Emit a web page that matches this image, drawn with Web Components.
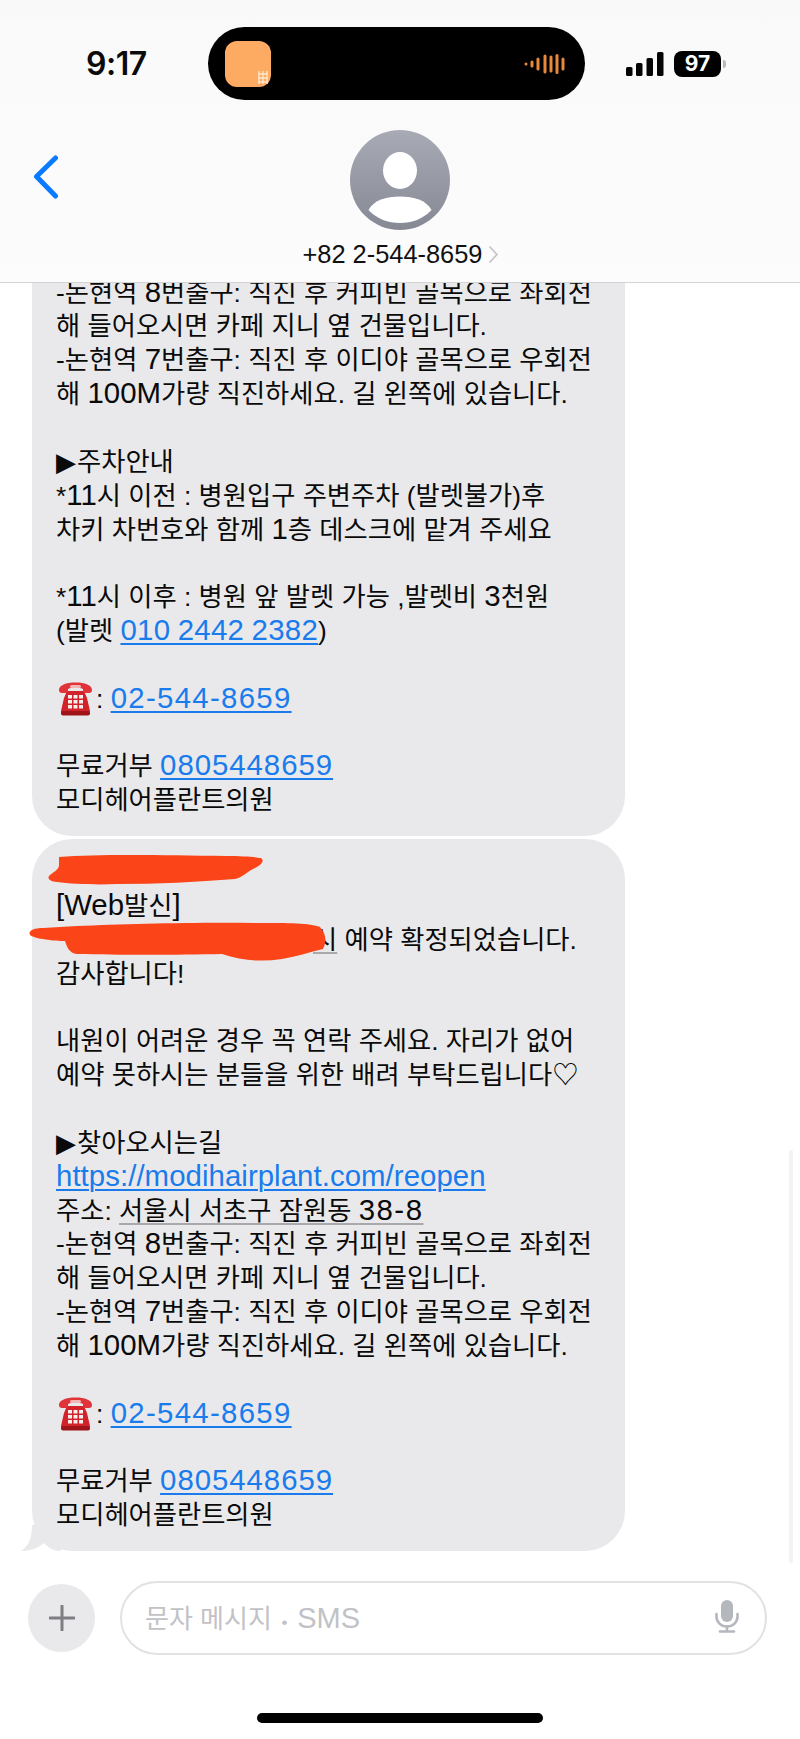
<!DOCTYPE html>
<html lang="ko">
<head>
<meta charset="utf-8">
<title>메시지</title>
<style>
  html, body { margin: 0; padding: 0; background: #fff; }
  body { width: 800px; height: 1739px; overflow: hidden; font-family: "Liberation Sans", "Noto Sans CJK KR", sans-serif; }
</style>
</head>
<body>
<sms-screen>
  <thread-header slot="header" number="+82 2-544-8659"></thread-header>

  <msg-bubble cut>
    <msg-line>-논현역 <msg-num>8</msg-num>번출구: 직진 후 커피빈 골목으로 좌회전</msg-line>
    <msg-line>해 들어오시면 카페 지니 옆 건물입니다.</msg-line>
    <msg-line>-논현역 <msg-num>7</msg-num>번출구: 직진 후 이디야 골목으로 우회전</msg-line>
    <msg-line>해 <msg-num>100M</msg-num>가량 직진하세요. 길 왼쪽에 있습니다.</msg-line>
    <msg-line></msg-line>
    <msg-line><msg-arrow>▶</msg-arrow>주차안내</msg-line>
    <msg-line>*<msg-num>11</msg-num>시 이전 : 병원입구 주변주차 (발렛불가)후</msg-line>
    <msg-line>차키 차번호와 함께 <msg-num>1</msg-num>층 데스크에 맡겨 주세요</msg-line>
    <msg-line></msg-line>
    <msg-line>*<msg-num>11</msg-num>시 이후 : 병원 앞 발렛 가능 ,발렛비 <msg-num>3</msg-num>천원</msg-line>
    <msg-line>(발렛 <msg-link spaced>010 2442 2382</msg-link>)</msg-line>
    <msg-line></msg-line>
    <msg-line><phone-emoji></phone-emoji>: <msg-link tel>02-544-8659</msg-link></msg-line>
    <msg-line></msg-line>
    <msg-line>무료거부 <msg-link>0805448659</msg-link></msg-line>
    <msg-line>모디헤어플란트의원</msg-line>
  </msg-bubble>

  <msg-bubble tail>
    <scribble-mark></scribble-mark>
    <msg-line></msg-line>
    <msg-line><msg-num>[Web</msg-num>발신<msg-num>]</msg-num></msg-line>
    <msg-line><msg-gap></msg-gap><msg-addr>시</msg-addr> 예약 확정되었습니다.</msg-line>
    <msg-line>감사합니다!</msg-line>
    <msg-line></msg-line>
    <msg-line>내원이 어려운 경우 꼭 연락 주세요. 자리가 없어</msg-line>
    <msg-line>예약 못하시는 분들을 위한 배려 부탁드립니다♡</msg-line>
    <msg-line></msg-line>
    <msg-line><msg-arrow>▶</msg-arrow>찾아오시는길</msg-line>
    <msg-line><msg-link url>https://modihairplant.com/reopen</msg-link></msg-line>
    <msg-line>주소: <msg-addr>서울시 서초구 잠원동 <msg-num wide>38-8</msg-num></msg-addr></msg-line>
    <msg-line>-논현역 <msg-num>8</msg-num>번출구: 직진 후 커피빈 골목으로 좌회전</msg-line>
    <msg-line>해 들어오시면 카페 지니 옆 건물입니다.</msg-line>
    <msg-line>-논현역 <msg-num>7</msg-num>번출구: 직진 후 이디야 골목으로 우회전</msg-line>
    <msg-line>해 <msg-num>100M</msg-num>가량 직진하세요. 길 왼쪽에 있습니다.</msg-line>
    <msg-line></msg-line>
    <msg-line><phone-emoji></phone-emoji>: <msg-link tel>02-544-8659</msg-link></msg-line>
    <msg-line></msg-line>
    <msg-line>무료거부 <msg-link>0805448659</msg-link></msg-line>
    <msg-line>모디헤어플란트의원</msg-line>
  </msg-bubble>

  <sms-composer slot="footer"></sms-composer>
</sms-screen>

<script>
// sms-screen: header, scrolled thread, composer
class SmsScreen extends HTMLElement {
  constructor() {
    super();
    this.attachShadow({ mode: 'open' });
  }
  connectedCallback() {
    this.shadowRoot.innerHTML = `
      <style>
        :host { display: flex; flex-direction: column; width: 800px; height: 1739px; background: #fff; overflow: hidden; }
        .thread {
          position: relative; height: 1280px; box-sizing: border-box; padding: 0 0 12px 32px;
          display: flex; flex-direction: column; justify-content: flex-end; gap: 3px; overflow: hidden;
        }
        .bar { position: absolute; right: 7px; bottom: 0; width: 4px; height: 413px; border-radius: 2px; background: #f3f3f4; }
      </style>
      <slot name="header"></slot>
      <div class="thread"><slot></slot><div class="bar"></div></div>
      <slot name="footer"></slot>
    `;
  }
}

class ThreadHeader extends HTMLElement {
  constructor() {
    super();
    this.attachShadow({ mode: 'open' });
  }
  connectedCallback() {
    const number = this.getAttribute('number');
    this.shadowRoot.innerHTML = `
      <style>
        :host {
          display: block; height: 283px; box-sizing: border-box; flex: none;
          background: linear-gradient(180deg, #f9f9f9 0%, #fcfcfd 100%);
          border-bottom: 1px solid #d4d4d6; position: relative; z-index: 2;
        }
        .status { display: grid; grid-template-columns: 208px 377px 1fr; height: 73px; padding-top: 27px; }
        .time { font: 600 32px "Inter", "Liberation Sans", sans-serif; letter-spacing: -0.5px; color: #0b0b0b; padding-left: 86px; line-height: 73px; }
        .island { background: #000; border-radius: 37px; display: flex; align-items: center; justify-content: space-between; padding: 0 20px 0 17px; }
        .app { width: 46px; height: 46px; display: block; }
        .right { display: flex; align-items: center; padding-left: 41px; gap: 10px; }
        .battery {
          width: 47px; height: 26px; border-radius: 8px; background: #000; color: #fff;
          font: 700 21px/26px "Inter", "Liberation Sans", sans-serif; text-align: center; position: relative;
        }
        .battery::after { content: ""; position: absolute; right: -5px; top: 9px; width: 3px; height: 8px; border-radius: 0 3px 3px 0; background: #b9b9b9; }
        .nav { display: grid; grid-template-columns: 1fr auto 1fr; padding-top: 30px; }
        .back { padding: 25px 0 0 33px; }
        .who { display: flex; flex-direction: column; align-items: center; gap: 11px; }
        .name { font-size: 25.4px; line-height: 26px; color: #111; display: flex; align-items: center; gap: 6px; white-space: nowrap; }
      </style>
      <div class="status">
        <div class="time">9:17</div>
        <div class="island">
          <svg class="app" viewBox="0 0 46 46">
            <rect width="46" height="46" rx="12" fill="#fdaa62"/>
            <path d="M34 30v13M38 30v13M42 30v13M33 33h10M33 37h10M33 41h10" stroke="#fde6c8" stroke-width="1.4" fill="none"/>
          </svg>
          <svg width="41" height="20" viewBox="0 0 41 20" fill="none" stroke="#e8893a" stroke-width="3" stroke-linecap="round">
            <path d="M2 10v.1M8 8v4M14 5v10M21 2v16M27 3v14M33 1.5v17M39 5v10"/>
          </svg>
        </div>
        <div class="right">
          <svg width="38" height="24" viewBox="0 0 38 24" fill="#050505">
            <rect x="0" y="15" width="6.5" height="9" rx="1.5"/>
            <rect x="10" y="11" width="6.5" height="13" rx="1.5"/>
            <rect x="20.5" y="6" width="6.5" height="18" rx="1.5"/>
            <rect x="31" y="0" width="6.5" height="24" rx="1.5"/>
          </svg>
          <div class="battery">97</div>
        </div>
      </div>
      <div class="nav">
        <div class="back">
          <svg width="26" height="44" viewBox="0 0 26 44" fill="none" stroke="#0a7aff" stroke-width="5" stroke-linecap="round" stroke-linejoin="round">
            <path d="M22.5 3 3.5 21.5 22.5 41"/>
          </svg>
        </div>
        <div class="who">
          <svg width="100" height="100" viewBox="0 0 100 100">
            <defs>
              <linearGradient id="av" x1="0" y1="0" x2="0" y2="1">
                <stop offset="0" stop-color="#a8abb6"/>
                <stop offset="1" stop-color="#868994"/>
              </linearGradient>
            </defs>
            <circle cx="50" cy="50" r="50" fill="url(#av)"/>
            <ellipse cx="50" cy="40.5" rx="17" ry="18.5" fill="#fff"/>
            <path d="M18.5 80C24 70 36 66.5 50 66.5S76 70 81.5 80C73 89 62 93 50 93S27 89 18.5 80Z" fill="#fff"/>
          </svg>
          <div class="name">${number}<svg width="9" height="17" viewBox="0 0 9 17" fill="none" stroke="#c5c5c8" stroke-width="1.8" stroke-linecap="round" stroke-linejoin="round"><path d="M1 1l7 7.5L1 16"/></svg></div>
        </div>
        <div></div>
      </div>
    `;
  }
}

class MsgBubble extends HTMLElement {
  constructor() {
    super();
    this.attachShadow({ mode: 'open' });
  }
  connectedCallback() {
    const tail = this.hasAttribute('tail');
    this.shadowRoot.innerHTML = `
      <style>
        :host {
          display: block; position: relative; flex: none; box-sizing: border-box; width: 593px;
          padding: 17px 0 18px 24px; background: #e9e9eb; border-radius: 40px; color: #0a0a0a;
          font-size: 26.3px; line-height: 33.85px;
        }
        /* top of this one is scrolled away under the header */
        :host([cut]) { padding-top: 77px; }
        svg { position: absolute; left: -11px; bottom: 0; }
      </style>
      <slot></slot>
      ${tail ? `<svg width="40" height="26" viewBox="0 0 40 26"><path d="M11 0C11 12 8 21 0 26C8 26 16 24 23 18C27 23 33 26 40 26L40 0Z" fill="#e9e9eb"/></svg>` : ''}
    `;
  }
}

class MsgLine extends HTMLElement {
  constructor() {
    super();
    this.attachShadow({ mode: 'open' });
    this.shadowRoot.innerHTML = `<style>:host { display: block; height: 33.85px; white-space: nowrap; }</style><slot></slot>`;
  }
}

class MsgLink extends HTMLElement {
  constructor() {
    super();
    this.attachShadow({ mode: 'open' });
    this.shadowRoot.innerHTML = `<style>
        :host { color: #1a7cec; font-size: 29.4px; line-height: 0; letter-spacing: 0.95px; text-decoration: underline; text-decoration-thickness: 2px; text-underline-offset: 3px; }
        :host([spaced]) { letter-spacing: 0.3px; word-spacing: -1.2px; }
        :host([tel]) { letter-spacing: 1.3px; }
        :host([url]) { letter-spacing: 0.05px; }
      </style><slot></slot>`;
  }
}

class MsgNum extends HTMLElement {
  constructor() {
    super();
    this.attachShadow({ mode: 'open' });
    this.shadowRoot.innerHTML = `<style>
        :host { font-size: 29.4px; line-height: 0; }
        :host([wide]) { letter-spacing: 1.5px; }
      </style><slot></slot>`;
  }
}

class MsgAddr extends HTMLElement {
  constructor() {
    super();
    this.attachShadow({ mode: 'open' });
    this.shadowRoot.innerHTML = `<style>
        :host { text-decoration: underline; text-decoration-color: #a9a9ad; text-decoration-thickness: 1.5px; text-underline-offset: 3px; }
      </style><slot></slot>`;
  }
}

class MsgArrow extends HTMLElement {
  constructor() {
    super();
    this.attachShadow({ mode: 'open' });
    this.shadowRoot.innerHTML = `<style>
        :host { font-family: "DejaVu Sans", sans-serif; font-size: 26px; line-height: 0; margin-right: 1px; }
      </style><slot></slot>`;
  }
}

// blank run under the second scribble, the text there is not readable
class MsgGap extends HTMLElement {
  constructor() {
    super();
    this.attachShadow({ mode: 'open' });
    this.shadowRoot.innerHTML = `<style>:host { display: inline-block; width: 257px; height: 1px; }</style>`;
  }
}

class ScribbleMark extends HTMLElement {
  constructor() {
    super();
    this.attachShadow({ mode: 'open' });
    this.shadowRoot.innerHTML = `<style>
        :host { position: absolute; left: 0; top: 0; width: 0; height: 0; z-index: 1; }
        svg { position: absolute; left: -5px; top: 10px; overflow: visible; }
      </style><svg width="310" height="115" viewBox="0 0 310 115" fill="#fb4518">
        <path d="M32 8C70 5 130 6 200 7C215 7 228 8 234 9C238 12 234 16 228 19C218 24 216 28 208 30C170 33 130 35 90 35C70 36 45 35 30 33C24 33 20 30 22 27C26 23 32 21 32 16Z"/>
        <path d="M50 77C100 75 170 73 230 74C262 74 283 74 293 78C299 85 300 92 296 100C283 103 268 108 255 110C235 113 215 112 195 105C150 106 90 106 50 105C42 104 40 98 38 92C28 92 8 90 3 86C1 82 6 79 16 79Z"/>
      </svg>`;
  }
}

class PhoneEmoji extends HTMLElement {
  constructor() {
    super();
    this.attachShadow({ mode: 'open' });
    this.shadowRoot.innerHTML = `<style>
        :host { display: inline-block; width: 35px; height: 34px; vertical-align: 2px; margin: -10px 3px -10px 2px; }
        svg { display: block; }
      </style><svg width="35" height="34" viewBox="0 0 35 34">
        <path d="M6 16 9 9h17l3 7 3 13c0 2-1 3-3 3H6c-2 0-3-1-3-3Z" fill="#d3232a"/>
        <rect x="3" y="29" width="29" height="4.5" rx="2" fill="#9e1418"/>
        <path d="M1 8C1 3 8 .5 17.5 .5S34 3 34 8c0 2-1 3-3 3h-4c-1.5 0-2-1-2-2V7c-2-1-5-1.5-7.5-1.5S12 6 10 7v2c0 1-.5 2-2 2H4C2 11 1 10 1 8Z" fill="#e0343a"/>
        <rect x="12" y="3" width="11" height="3" rx="1.5" fill="#f6b5b5"/>
        <g fill="#f4f0ee">
          <rect x="10" y="13" width="4" height="3.5"/><rect x="15.5" y="13" width="4" height="3.5"/><rect x="21" y="13" width="4" height="3.5"/>
          <rect x="10" y="18" width="4" height="3.5"/><rect x="15.5" y="18" width="4" height="3.5"/><rect x="21" y="18" width="4" height="3.5"/>
          <rect x="10" y="23" width="4" height="3.5"/><rect x="15.5" y="23" width="4" height="3.5"/><rect x="21" y="23" width="4" height="3.5"/>
        </g>
      </svg>`;
  }
}

class SmsComposer extends HTMLElement {
  constructor() {
    super();
    this.attachShadow({ mode: 'open' });
  }
  connectedCallback() {
    this.shadowRoot.innerHTML = `
      <style>
        :host { display: block; flex: none; padding-top: 18px; }
        .row { display: flex; align-items: center; gap: 25px; padding: 0 33px 0 28px; }
        .plus { width: 67px; height: 68px; border-radius: 50%; background: #e9e9eb; display: flex; align-items: center; justify-content: center; flex: none; }
        .field {
          flex: 1; height: 74px; box-sizing: border-box; border: 2px solid #e2e2e4; border-radius: 37px;
          display: flex; align-items: center; justify-content: space-between; padding: 0 26px 3px 23px;
          color: #c2c2c6; font-size: 26px; white-space: nowrap;
        }
        .dot { font-size: 17px; margin: 0 5px; }
        .lat { font-size: 29px; }
        .home { width: 286px; height: 10px; border-radius: 5px; background: #000; margin: 58px auto 0; }
      </style>
      <div class="row">
        <div class="plus">
          <svg width="26" height="26" viewBox="0 0 26 26" stroke="#7e7f83" stroke-width="3" stroke-linecap="round"><path d="M13 1v24M1 13h24"/></svg>
        </div>
        <div class="field">
          <span>문자 메시지<span class="dot"> • </span><span class="lat">SMS</span></span>
          <svg width="24" height="33" viewBox="0 0 24 33" fill="none">
            <rect x="6" y="0" width="12" height="22" rx="6" fill="#b4b8bd"/>
            <path d="M1.5 14v2.5C1.5 22 6 26.5 12 26.5S22.5 22 22.5 16.5V14" stroke="#b4b8bd" stroke-width="2.6" stroke-linecap="round"/>
            <path d="M12 26.5v5M5 31.5h14" stroke="#b4b8bd" stroke-width="2.6" stroke-linecap="round"/>
          </svg>
        </div>
      </div>
      <div class="home"></div>
    `;
  }
}

customElements.define('sms-screen', SmsScreen);
customElements.define('thread-header', ThreadHeader);
customElements.define('msg-bubble', MsgBubble);
customElements.define('msg-line', MsgLine);
customElements.define('msg-link', MsgLink);
customElements.define('msg-num', MsgNum);
customElements.define('msg-addr', MsgAddr);
customElements.define('msg-arrow', MsgArrow);
customElements.define('msg-gap', MsgGap);
customElements.define('scribble-mark', ScribbleMark);
customElements.define('phone-emoji', PhoneEmoji);
customElements.define('sms-composer', SmsComposer);
</script>
</body>
</html>
